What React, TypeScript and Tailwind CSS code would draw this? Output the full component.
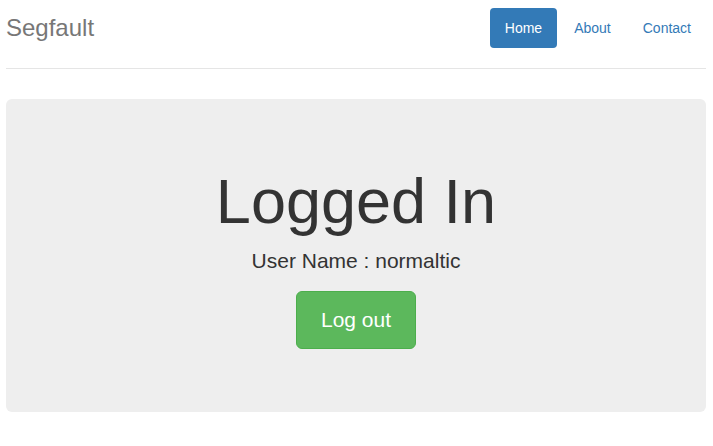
export default function App() {
  return (
    <div className="min-h-[446px] bg-white pl-[6px] pr-[7px] pt-[8px] text-[14px] leading-[20px] text-[#333]" style={{ fontFamily: '"Liberation Sans", Arial, sans-serif' }}>
      <div className="flex items-start justify-between border-b border-[#e5e5e5] pb-[20px]">
        <h3 className="m-0 text-[24px] leading-[40px] font-medium text-[#777]">Segfault</h3>
        <nav className="flex">
          <a className="block rounded-[4px] bg-[#337ab7] px-[15px] py-[10px] text-white">Home</a>
          <a className="ml-[2px] block rounded-[4px] px-[15px] py-[10px] text-[#337ab7]">About</a>
          <a className="ml-[2px] block rounded-[4px] px-[15px] py-[10px] text-[#337ab7]">Contact</a>
        </nav>
      </div>
      <div className="mt-[30px] rounded-[6px] bg-[#eeeeee] px-[15px] py-[48px] text-center">
        <h1 className="mt-[20px] mb-[10px] text-[63px] leading-[1.1] font-medium text-[#333]">Logged In</h1>
        <p className="mb-[15px] text-[21px] leading-[30px] text-[#333]">User Name : normaltic</p>
        <p className="mb-[15px] text-[21px] leading-[30px]">
          <a className="inline-block rounded-[6px] border border-[#4cae4c] bg-[#5cb85c] px-[24px] py-[14px] align-middle text-[21px] leading-[28px] text-white">Log out</a>
        </p>
      </div>
    </div>
  );
}
